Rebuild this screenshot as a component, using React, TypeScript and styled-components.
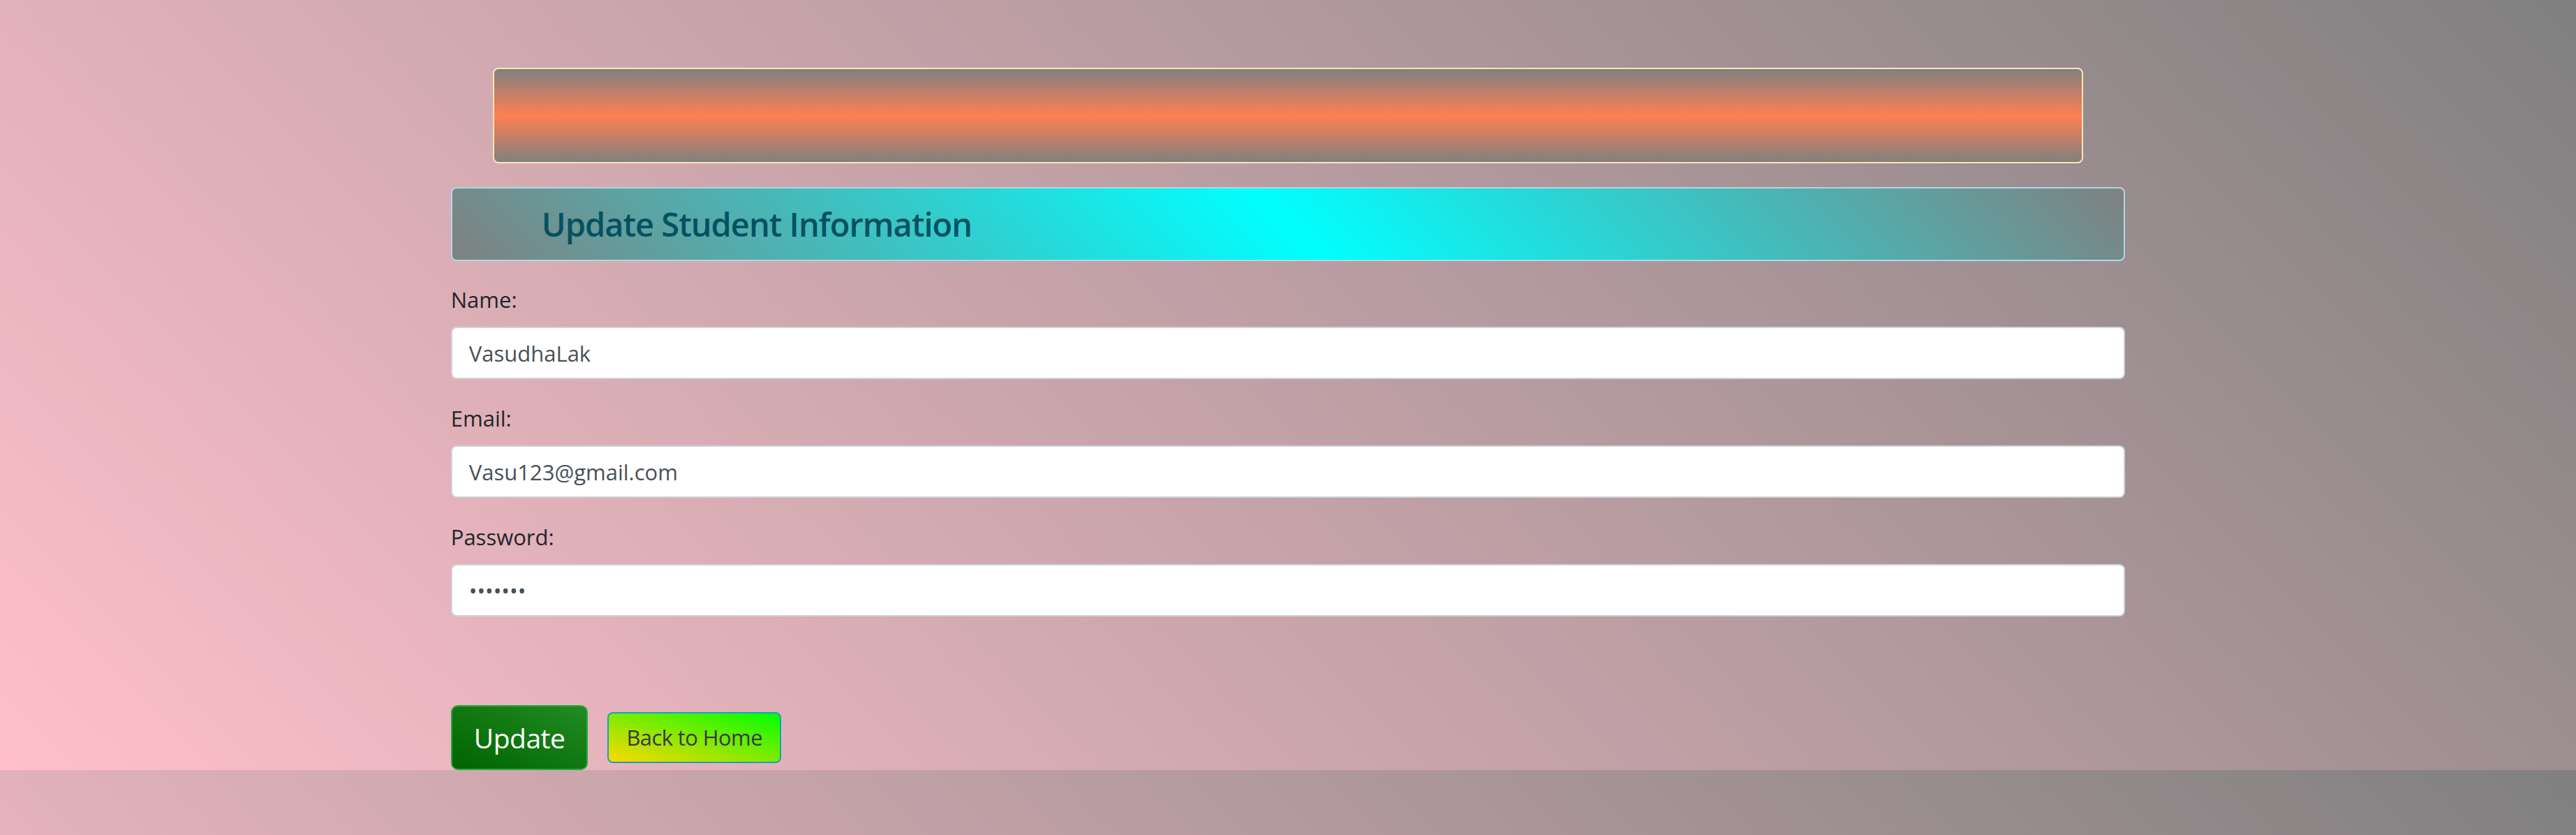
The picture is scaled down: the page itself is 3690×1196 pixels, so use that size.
import styled, { createGlobalStyle } from 'styled-components'

const GlobalStyle = createGlobalStyle`
  html, body {
    margin: 0;
  }
  body {
    background: linear-gradient(45deg, pink, gray);
    font-family: 'Open Sans', 'Noto Sans', sans-serif;
    color: #212529;
  }
`

const fields = [
  { label: 'Name:', type: 'text', value: 'VasudhaLak' },
  { label: 'Email:', type: 'email', value: 'Vasu123@gmail.com' },
  { label: 'Password:', type: 'password', value: 'vasu123' },
]

export default function App() {
  return (
    <>
      <GlobalStyle />
      <Page>
        <Container>
          <Banner />
          <TitleBar>
            <Title>Update Student Information</Title>
          </TitleBar>
          <Form onSubmit={(e) => e.preventDefault()}>
            {fields.map((f) => (
              <Field key={f.label}>
                <Label>{f.label}</Label>
                <Input type={f.type} defaultValue={f.value} />
              </Field>
            ))}
            <Actions>
              <UpdateButton type="submit">Update</UpdateButton>
              <HomeButton type="button">Back to Home</HomeButton>
            </Actions>
          </Form>
        </Container>
      </Page>
    </>
  )
}

const Page = styled.div`
  padding-top: 97px;
`

const Container = styled.div`
  width: 65%;
  margin: 0 auto;
`

const Banner = styled.div`
  width: 95%;
  height: 137px;
  margin: 0 auto;
  box-sizing: border-box;
  border: 2px solid moccasin;
  border-radius: 8px;
  background: linear-gradient(gray, coral, gray);
`

const TitleBar = styled.div`
  margin-top: 34px;
  height: 106px;
  box-sizing: border-box;
  display: flex;
  align-items: center;
  padding-left: 128px;
  border: 2px solid lightblue;
  border-radius: 8px;
  background: linear-gradient(45deg, gray, cyan, gray);
`

const Title = styled.h2`
  margin: 0;
  font-size: 47px;
  font-weight: 600;
  letter-spacing: -1px;
  color: #055160;
`

const Form = styled.form`
  margin-top: 31px;
`

const Field = styled.div`
  margin-bottom: 32px;
`

const Label = styled.label`
  display: block;
  font-size: 31px;
  line-height: 48px;
  margin-bottom: 15px;
`

const Input = styled.input`
  display: block;
  width: 100%;
  height: 75px;
  box-sizing: border-box;
  padding: 0 24px;
  border: 2px solid #ced4da;
  border-radius: 8px;
  background: #fff;
  font-family: inherit;
  font-size: 31px;
  color: #495057;
  outline: none;
`

const Actions = styled.div`
  display: flex;
  align-items: center;
  gap: 28px;
  margin-top: 127px;
`

const UpdateButton = styled.button`
  font-family: inherit;
  font-size: 39px;
  letter-spacing: -0.5px;
  line-height: 57px;
  padding: 16px 31px;
  border: 2px solid #28a745;
  border-radius: 10px;
  color: #fff;
  background: linear-gradient(to top right, darkgreen, forestgreen);
  cursor: pointer;
`

const HomeButton = styled.button`
  font-family: inherit;
  font-size: 31px;
  letter-spacing: -0.6px;
  line-height: 45px;
  padding: 12px 25px;
  border: 2px solid #17a2b8;
  border-radius: 8px;
  color: #3c3846;
  background: linear-gradient(to top right, gold, lime);
  cursor: pointer;
`
